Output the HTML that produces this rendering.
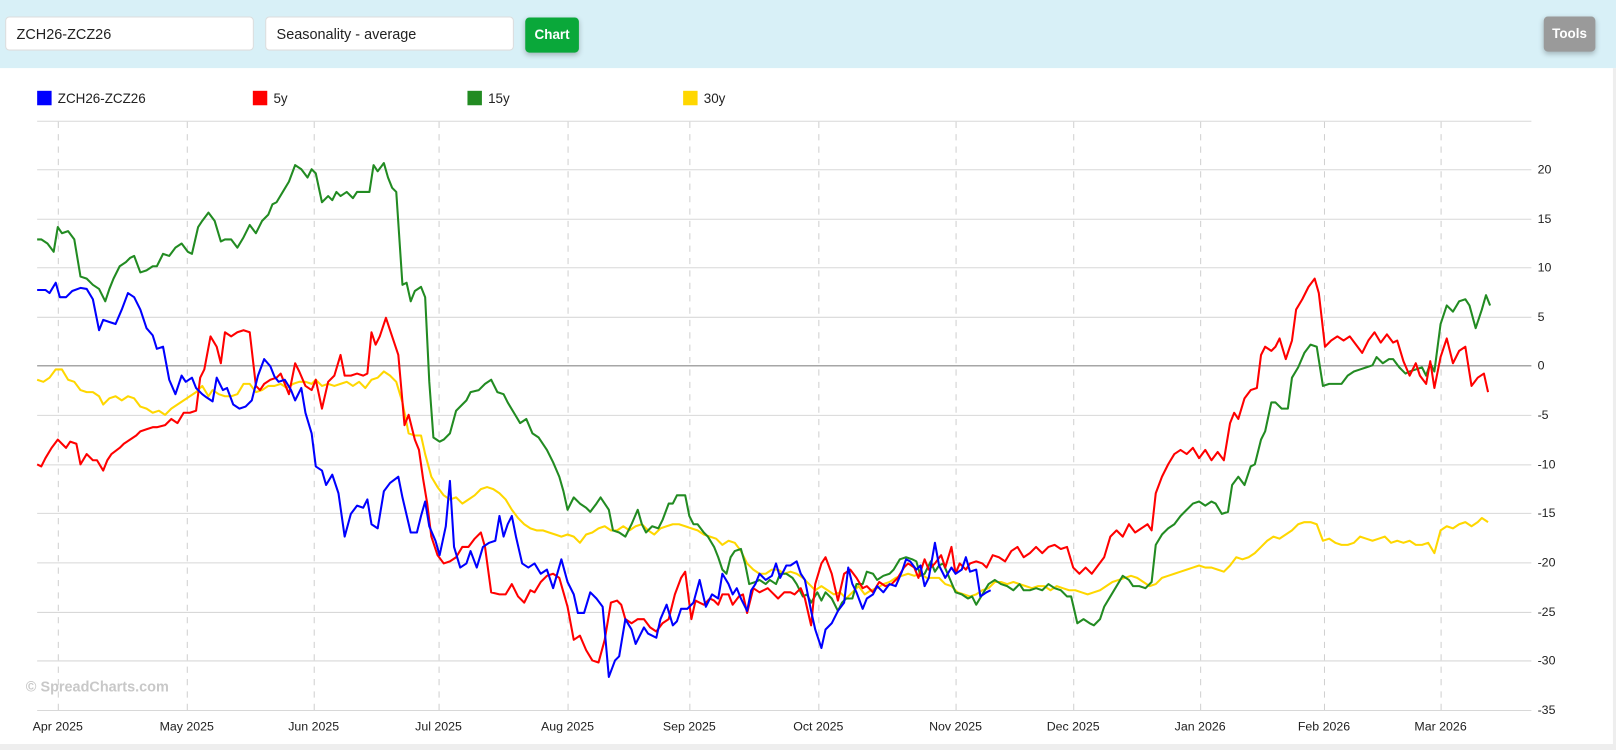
<!DOCTYPE html>
<html><head><meta charset="utf-8"><style>
html,body{margin:0;padding:0;width:1616px;height:750px;overflow:hidden;background:#fff;font-family:"Liberation Sans",Arial,sans-serif}
#w{position:absolute;left:0;top:0;width:1566px;height:727px;transform:scale(1.03193);transform-origin:0 0}
#hdr{position:absolute;left:0;top:0;width:1566px;height:66px;background:#d8f0f7}
.inp{position:absolute;top:16px;height:33px;width:241px;background:#fff;border:1px solid #ddd;border-radius:4px;box-sizing:border-box;font-size:14px;line-height:33px;padding-left:10px;color:#222}
.btn{position:absolute;border-radius:4px;color:#fff;font-weight:bold;font-size:13px;text-align:center;box-shadow:0 2px 5px rgba(0,0,0,.25)}
#bot{position:absolute;left:0;top:721px;width:1566px;height:6px;background:#eee}
#side{position:absolute;left:1563px;top:66px;width:3px;height:661px;background:#eee}
</style></head><body><div id="w">
<div id="hdr">
<div class="inp" style="left:5px">ZCH26-ZCZ26</div>
<div class="inp" style="left:257px">Seasonality - average</div>
<div class="btn" style="left:509px;top:17px;width:52px;height:34px;line-height:34px;background:#0aa83a">Chart</div>
<div class="btn" style="left:1496px;top:16px;width:50px;height:34px;line-height:34px;background:#9a9a9a">Tools</div>
</div>
<div id="side"></div><div id="bot"></div>
<svg width="1566" height="727" style="position:absolute;left:0;top:0" font-family="Liberation Sans, Arial, sans-serif">
<g font-size="13" fill="#222">
<rect x="36" y="88" width="14" height="14" fill="#0000ff"/><text x="56" y="100">ZCH26-ZCZ26</text>
<rect x="245" y="88" width="14" height="14" fill="#ff0000"/><text x="265" y="100">5y</text>
<rect x="453" y="88" width="14" height="14" fill="#228b22"/><text x="473" y="100">15y</text>
<rect x="662" y="88" width="14" height="14" fill="#ffd700"/><text x="682" y="100">30y</text>
</g>
<g stroke="#d8d8d8" stroke-width="1">
<line x1="36" x2="1484" y1="117.5" y2="117.5"/>
<line x1="36" x2="1484" y1="164.5" y2="164.5"/>
<line x1="36" x2="1484" y1="212.5" y2="212.5"/>
<line x1="36" x2="1484" y1="259.5" y2="259.5"/>
<line x1="36" x2="1484" y1="307.5" y2="307.5"/>
<line x1="36" x2="1484" y1="402.5" y2="402.5"/>
<line x1="36" x2="1484" y1="450.5" y2="450.5"/>
<line x1="36" x2="1484" y1="497.5" y2="497.5"/>
<line x1="36" x2="1484" y1="545.5" y2="545.5"/>
<line x1="36" x2="1484" y1="593.5" y2="593.5"/>
<line x1="36" x2="1484" y1="640.5" y2="640.5"/>
<line x1="36" x2="1484" y1="688.5" y2="688.5"/>
</g>
<line x1="36" x2="1484" y1="354.5" y2="354.5" stroke="#888"/>
<g stroke="#d0d0d0" stroke-dasharray="6,6">
<line x1="56.5" x2="56.5" y1="118" y2="688"/><line x1="181.5" x2="181.5" y1="118" y2="688"/><line x1="304.5" x2="304.5" y1="118" y2="688"/><line x1="425.5" x2="425.5" y1="118" y2="688"/><line x1="550.5" x2="550.5" y1="118" y2="688"/><line x1="668.5" x2="668.5" y1="118" y2="688"/><line x1="793.5" x2="793.5" y1="118" y2="688"/><line x1="926.5" x2="926.5" y1="118" y2="688"/><line x1="1040.5" x2="1040.5" y1="118" y2="688"/><line x1="1163.5" x2="1163.5" y1="118" y2="688"/><line x1="1283.5" x2="1283.5" y1="118" y2="688"/><line x1="1396.5" x2="1396.5" y1="118" y2="688"/>
</g>
<g font-size="12" fill="#222">
<text x="1490" y="168">20</text><text x="1490" y="216">15</text><text x="1490" y="263">10</text><text x="1490" y="311">5</text><text x="1490" y="358">0</text><text x="1490" y="406">-5</text><text x="1490" y="454">-10</text><text x="1490" y="501">-15</text><text x="1490" y="549">-20</text><text x="1490" y="597">-25</text><text x="1490" y="644">-30</text><text x="1490" y="692">-35</text>
</g>
<g font-size="12" fill="#222" text-anchor="middle">
<text x="56" y="708">Apr 2025</text><text x="181" y="708">May 2025</text><text x="304" y="708">Jun 2025</text><text x="425" y="708">Jul 2025</text><text x="550" y="708">Aug 2025</text><text x="668" y="708">Sep 2025</text><text x="793" y="708">Oct 2025</text><text x="926" y="708">Nov 2025</text><text x="1040" y="708">Dec 2025</text><text x="1163" y="708">Jan 2026</text><text x="1283" y="708">Feb 2026</text><text x="1396" y="708">Mar 2026</text>
</g>
<text x="25" y="670" font-size="14" font-weight="bold" fill="#c8c8c8">© SpreadCharts.com</text>
<g fill="none" stroke-width="2" stroke-linejoin="round">
<polyline stroke="#ffd700" points="36,368 42,370 48,366 54,358 60,358 66,368 72,370 78,378 84,380 90,380 96,384 100,392 106,386 112,384 118,388 124,384 130,386 136,394 142,396 148,400 154,398 160,402 166,396 172,392 178,388 184,384 190,380 196,374 202,384 206,378 212,382 218,384 224,384 230,382 236,372 242,372 248,380 254,378 260,374 266,374 272,372 278,376 284,372 290,370 296,370 302,372 306,368 312,374 318,372 324,374 330,372 336,370 342,374 348,370 354,376 360,368 366,366 372,360 378,364 384,370 390,390 396,420 402,422 408,422 412,440 418,462 424,472 430,480 436,484 442,482 448,488 454,484 460,480 466,474 472,472 478,474 484,478 490,484 496,494 502,502 508,508 514,512 520,514 526,514 532,516 538,518 544,520 550,518 556,520 562,526 568,518 574,516 580,512 586,510 592,514 598,514 604,510 610,514 616,510 622,508 628,514 634,518 640,512 646,510 652,508 658,508 664,510 670,512 676,514 682,518 688,520 694,522 700,528 706,524 712,526 718,534 724,546 730,552 736,556 742,556 748,552 754,552 760,556 766,554 772,556 778,560 784,566 790,572 796,568 802,572 808,576 814,574 820,580 826,574 832,568 838,576 844,572 850,570 856,566 862,564 868,560 874,558 880,556 886,558 892,556 898,560 904,560 910,560 916,566 922,568 928,574 934,576 940,578 946,576 952,572 958,570 964,564 970,564 976,566 982,564 988,566 994,568 1000,570 1006,568 1012,568 1018,572 1024,568 1030,570 1036,572 1042,572 1048,574 1054,576 1060,574 1066,572 1072,568 1078,564 1084,562 1090,560 1096,558 1102,560 1108,564 1114,568 1120,566 1126,560 1132,558 1138,556 1144,554 1150,552 1156,550 1162,548 1168,550 1174,550 1180,552 1186,554 1192,548 1198,540 1204,542 1210,540 1216,536 1222,530 1228,524 1234,520 1240,522 1246,518 1252,514 1258,508 1264,506 1270,506 1276,508 1282,524 1288,522 1294,526 1300,528 1306,528 1312,526 1318,520 1324,522 1330,524 1336,522 1342,520 1348,526 1354,524 1360,526 1366,524 1372,528 1378,528 1384,526 1390,536 1396,514 1402,510 1408,512 1414,508 1420,506 1426,510 1432,506 1436,502 1442,506"/>
<polyline stroke="#228b22" points="36,232 40,232 46,236 52,244 56,220 60,226 66,224 72,232 78,268 84,270 90,276 96,280 102,292 106,280 110,270 116,258 122,254 126,250 130,248 136,264 142,262 148,258 152,258 158,246 164,248 170,240 176,236 182,244 186,246 192,220 196,214 202,206 208,214 214,234 218,232 224,232 230,240 236,230 242,218 248,226 254,214 260,208 264,198 268,196 274,186 280,176 286,160 292,164 298,172 302,164 306,168 312,196 318,190 322,194 326,186 330,190 336,186 342,192 346,186 352,186 358,186 362,160 366,166 372,158 376,172 380,182 384,186 390,276 394,274 398,292 402,282 408,278 412,288 416,370 420,424 426,428 430,426 436,420 442,398 448,392 452,388 456,380 464,378 470,372 476,368 482,380 488,382 492,390 498,400 504,410 510,406 516,420 522,424 530,436 536,448 542,462 546,476 550,494 556,482 562,488 568,492 572,496 578,488 582,482 590,494 594,514 600,516 606,520 612,508 618,494 622,508 626,516 632,510 638,512 642,504 648,488 652,488 656,480 664,480 668,500 672,508 676,508 682,516 686,520 692,530 696,540 700,552 704,556 708,540 712,534 718,532 722,546 726,566 732,564 736,562 742,566 746,562 752,566 756,556 762,556 768,560 772,566 778,578 782,576 786,584 792,574 796,582 800,574 806,580 812,592 816,584 820,580 826,580 830,566 836,566 840,554 846,556 850,562 856,558 862,556 866,552 872,542 878,540 884,542 888,544 892,558 896,556 902,544 906,554 910,548 914,546 920,560 926,574 932,576 938,580 942,578 946,586 952,576 958,566 964,562 970,566 976,568 982,572 988,566 992,572 998,572 1004,570 1010,572 1016,566 1022,570 1028,572 1034,578 1038,578 1044,604 1050,600 1056,604 1060,606 1066,600 1070,588 1076,578 1082,568 1088,558 1094,562 1098,568 1104,568 1110,570 1116,564 1120,528 1126,518 1132,512 1138,508 1144,500 1150,494 1156,488 1162,486 1168,490 1174,486 1178,488 1184,498 1190,496 1194,470 1200,462 1206,470 1212,452 1216,450 1222,426 1226,418 1232,390 1236,390 1242,396 1248,396 1252,366 1258,356 1264,342 1270,334 1276,336 1282,374 1288,372 1300,372 1306,364 1312,360 1318,358 1324,356 1330,354 1334,346 1340,352 1346,348 1350,348 1356,356 1362,362 1366,360 1372,358 1378,356 1382,364 1386,352 1390,360 1396,314 1402,296 1408,302 1414,292 1420,290 1424,296 1430,318 1436,300 1440,286 1444,296"/>
<polyline stroke="#ff0000" points="36,450 40,452 44,444 50,434 56,426 60,430 64,434 68,428 74,430 78,450 84,440 90,446 94,446 100,456 104,446 108,440 116,434 120,430 126,426 132,422 136,418 142,416 148,414 152,414 160,412 166,406 172,410 178,400 184,400 190,398 194,366 198,358 204,326 210,336 214,352 218,322 224,326 230,322 236,320 242,322 248,374 252,378 256,372 262,368 268,366 272,362 276,372 280,382 286,352 290,360 296,374 302,378 306,368 312,396 318,370 324,364 330,344 334,364 340,364 346,362 352,364 356,362 360,322 364,334 368,326 374,308 380,326 386,344 392,412 396,402 402,426 406,436 410,464 414,488 418,520 424,538 430,546 436,544 442,540 448,530 454,530 460,522 466,516 470,530 476,574 484,576 490,576 496,566 502,578 508,584 514,572 518,574 524,564 530,558 536,556 542,560 546,574 550,588 556,620 562,616 568,630 574,640 580,642 586,620 592,584 598,582 602,586 606,600 612,604 618,600 624,600 630,608 636,612 642,604 648,600 654,576 660,560 664,554 670,600 674,582 678,584 682,586 688,580 692,582 696,586 700,576 706,576 710,586 716,578 720,576 724,594 730,570 736,574 740,572 744,570 748,574 754,580 760,574 766,574 770,576 776,570 780,580 786,606 790,566 796,546 800,540 806,556 812,582 818,556 824,552 830,560 836,570 840,568 846,574 852,564 858,568 864,566 870,560 876,550 880,546 886,550 890,560 896,542 900,552 906,546 912,538 916,550 922,530 926,556 930,546 936,552 940,546 946,544 952,546 956,550 962,538 968,540 974,544 980,534 986,530 992,540 998,536 1004,530 1010,536 1016,530 1022,528 1028,532 1034,530 1040,550 1046,556 1052,550 1058,556 1064,548 1070,540 1076,520 1082,514 1088,520 1094,508 1100,516 1106,512 1112,508 1116,514 1120,478 1126,462 1132,450 1138,440 1144,436 1150,440 1156,434 1162,444 1168,436 1174,446 1180,438 1186,446 1192,410 1196,400 1200,406 1206,386 1212,378 1218,376 1222,344 1226,336 1232,340 1236,336 1240,328 1246,348 1252,330 1256,300 1262,290 1268,278 1274,270 1278,284 1284,336 1290,330 1296,326 1302,330 1308,326 1314,334 1320,342 1326,330 1332,322 1338,332 1344,324 1350,332 1354,330 1360,350 1366,364 1372,352 1376,364 1382,372 1386,350 1390,376 1396,346 1402,328 1408,352 1414,340 1420,336 1426,374 1432,366 1438,362 1442,380"/>
<polyline stroke="#0000ff" points="36,281 44,281 48,284 54,274 58,288 64,288 70,282 78,279 84,280 90,290 96,320 100,310 106,312 112,314 118,300 124,284 130,288 136,300 142,318 148,325 152,338 158,336 164,368 170,382 176,364 180,370 186,366 190,376 196,382 200,385 206,389 210,366 216,378 220,376 226,392 232,396 238,394 244,388 250,364 256,348 262,355 266,365 270,370 276,368 282,378 286,388 292,376 296,400 302,420 306,452 312,456 316,470 322,460 328,478 334,520 340,498 346,490 352,492 356,484 360,508 366,512 372,476 378,468 386,462 390,482 398,516 404,516 408,500 412,486 416,510 422,524 426,538 432,510 436,466 440,530 446,550 452,546 456,534 462,550 468,530 474,526 480,524 484,500 488,520 492,508 496,500 500,520 506,546 512,550 518,546 524,556 530,552 536,570 544,542 550,564 556,576 560,594 566,594 572,574 578,580 584,588 590,656 596,640 600,636 606,600 612,610 616,624 620,616 624,608 628,614 636,618 640,600 646,586 652,606 656,602 660,590 666,590 672,584 678,562 684,588 690,576 696,580 700,556 706,566 710,576 714,570 718,580 724,592 728,572 732,566 736,556 742,562 748,558 752,546 756,560 762,548 766,548 772,544 776,556 780,562 786,592 790,610 796,628 800,610 806,604 812,592 818,584 822,550 826,566 830,574 836,590 840,580 846,576 850,568 856,574 862,566 868,568 874,554 878,542 882,544 888,552 892,548 896,568 900,560 906,526 910,548 916,560 922,550 926,556 932,552 936,540 940,554 946,552 950,578 956,574 960,572"/>
</g>
</svg>
</div></body></html>
